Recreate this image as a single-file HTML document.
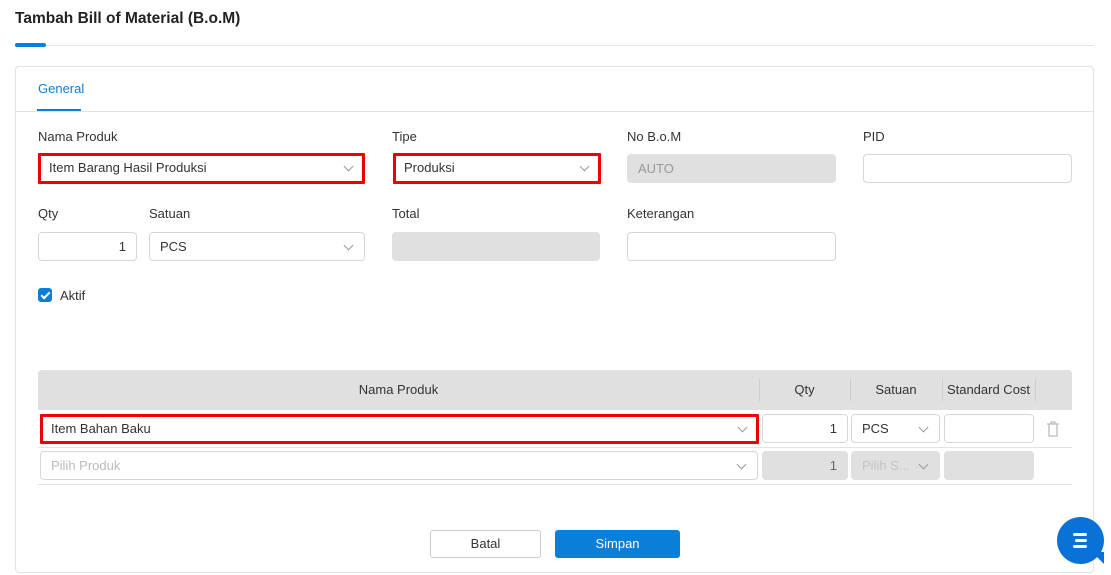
<!DOCTYPE html><html><head><style>
body{margin:0;width:1111px;height:575px;background:#fff;font-family:"Liberation Sans",sans-serif;font-size:13px;color:#333;position:relative;overflow:hidden}
.a{position:absolute}
.in{position:absolute;box-sizing:border-box;border:1px solid #d6d6d6;border-radius:4px;background:#fff;height:29px;line-height:27px;padding-left:10px;font-size:13px;color:#333}
.g{background:#e0e0e0;border-color:#e0e0e0;color:#999}
.red{border:3px solid #e00;border-radius:1px;line-height:23px;padding-left:8px}
.chev{position:absolute;right:12px;top:9px;width:6px;height:6px;border-right:1px solid #999;border-bottom:1px solid #999;transform:rotate(45deg)}
.red .chev{right:10px;top:7px}
.lbl{position:absolute;font-size:13px;color:#333}
.r{text-align:right;padding-right:10px}
</style></head><body>
<div class="a" style="left:15px;top:10px;font-weight:bold;font-size:15.5px;color:#222">Tambah Bill of Material (B.o.M)</div>
<div class="a" style="left:15px;top:45px;width:1079px;height:1px;background:#e6e6e6"></div>
<div class="a" style="left:15px;top:43px;width:31px;height:4px;border-radius:2px;background:#0a7fd9"></div>
<div class="a" style="left:15px;top:66px;width:1077px;height:505px;border:1px solid #e3e3e3;border-radius:4px"></div>
<div class="a" style="left:16px;top:111px;width:1077px;height:1px;background:#e3e3e3"></div>
<div class="a" style="left:38px;top:81px;color:#0a7fd9;font-size:13px">General</div>
<div class="a" style="left:37px;top:109px;width:44px;height:2px;background:#0a7fd9"></div>

<div class="lbl" style="left:38px;top:129px">Nama Produk</div>
<div class="lbl" style="left:392px;top:129px">Tipe</div>
<div class="lbl" style="left:627px;top:129px">No B.o.M</div>
<div class="lbl" style="left:863px;top:129px">PID</div>
<div class="in red" style="left:38px;top:153px;width:327px;height:31px">Item Barang Hasil Produksi<span class="chev"></span></div>
<div class="in red" style="left:393px;top:153px;width:208px;height:31px">Produksi<span class="chev"></span></div>
<div class="in g" style="left:627px;top:154px;width:209px">AUTO</div>
<div class="in" style="left:863px;top:154px;width:209px"></div>

<div class="lbl" style="left:38px;top:206px">Qty</div>
<div class="lbl" style="left:149px;top:206px">Satuan</div>
<div class="lbl" style="left:392px;top:206px">Total</div>
<div class="lbl" style="left:627px;top:206px">Keterangan</div>
<div class="in r" style="left:38px;top:232px;width:99px">1</div>
<div class="in" style="left:149px;top:232px;width:216px">PCS<span class="chev"></span></div>
<div class="in g" style="left:392px;top:232px;width:208px"></div>
<div class="in" style="left:627px;top:232px;width:209px"></div>

<div class="a" style="left:38px;top:288px;width:14px;height:14px;border-radius:3px;background:#0a7fd9"></div>
<div class="a" style="left:43px;top:290px;width:3px;height:7px;border-right:2px solid #fff;border-bottom:2px solid #fff;transform:rotate(45deg)"></div>
<div class="lbl" style="left:60px;top:288px">Aktif</div>

<div class="a" style="left:38px;top:370px;width:1034px;height:40px;background:#e0e0e0;border-radius:4px 4px 0 0"></div>
<div class="lbl" style="left:38px;top:382px;width:721px;text-align:center">Nama Produk</div>
<div class="lbl" style="left:759px;top:382px;width:91px;text-align:center">Qty</div>
<div class="lbl" style="left:850px;top:382px;width:92px;text-align:center">Satuan</div>
<div class="lbl" style="left:942px;top:382px;width:93px;text-align:center">Standard Cost</div>
<div class="a" style="left:759px;top:379px;width:1px;height:22px;background:#ccc"></div>
<div class="a" style="left:850px;top:379px;width:1px;height:22px;background:#ccc"></div>
<div class="a" style="left:942px;top:379px;width:1px;height:22px;background:#ccc"></div>
<div class="a" style="left:1035px;top:379px;width:1px;height:22px;background:#ccc"></div>

<div class="in red" style="left:40px;top:414px;width:719px;height:30px">Item Bahan Baku<span class="chev"></span></div>
<div class="in r" style="left:762px;top:414px;width:86px">1</div>
<div class="in" style="left:851px;top:414px;width:89px">PCS<span class="chev"></span></div>
<div class="in" style="left:944px;top:414px;width:90px"></div>
<svg class="a" style="left:1046px;top:421px" width="14" height="16" viewBox="0 0 14 16"><path d="M1 3h12M5 3V1h4v2M3 3v12h8V3" fill="none" stroke="#bbb" stroke-width="1.3"/></svg>
<div class="a" style="left:38px;top:447px;width:1034px;height:1px;background:#e3e3e3"></div>
<div class="in" style="left:40px;top:451px;width:718px;color:#bbb">Pilih Produk<span class="chev"></span></div>
<div class="in g r" style="left:762px;top:451px;width:86px;color:#666">1</div>
<div class="in g" style="left:851px;top:451px;width:89px;color:#c4c4c4">Pilih S...<span class="chev"></span></div>
<div class="in g" style="left:944px;top:451px;width:90px"></div>
<div class="a" style="left:38px;top:484px;width:1034px;height:1px;background:#e3e3e3"></div>

<div class="a" style="left:430px;top:530px;width:109px;height:26px;border:1px solid #ccc;border-radius:3px;text-align:center;line-height:26px">Batal</div>
<div class="a" style="left:555px;top:530px;width:125px;height:28px;background:#0a7fd9;border-radius:3px;text-align:center;line-height:28px;color:#fff">Simpan</div>

<div class="a" style="left:1057px;top:517px;width:47px;height:47px;border-radius:50%;background:#0a72d6"></div>
<div class="a" style="left:1092px;top:552px;width:0;height:0;border-left:12px solid transparent;border-top:12px solid #0a72d6"></div>
<div class="a" style="left:1073px;top:533px;width:14px;height:3px;background:#fff;border-radius:2px"></div>
<div class="a" style="left:1075px;top:539px;width:12px;height:3px;background:#fff;border-radius:2px"></div>
<div class="a" style="left:1073px;top:545px;width:14px;height:3px;background:#fff;border-radius:2px"></div>
</body></html>
